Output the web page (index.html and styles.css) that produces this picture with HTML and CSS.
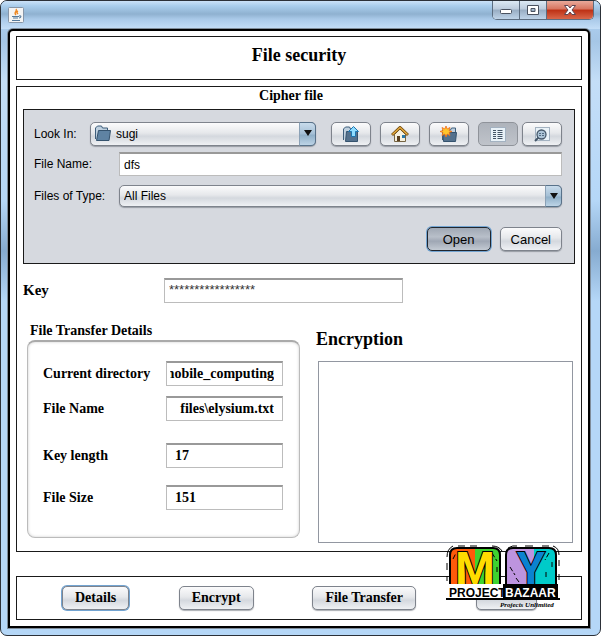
FILE: index.html
```
<!DOCTYPE html>
<html lang="en">
<head>
    <meta charset="UTF-8">
    <meta name="viewport" content="width=device-width, initial-scale=1.0">
    <title>File security</title>
    <link rel="stylesheet" href="styles.css">
</head>
<body>
    <div class="window">
        <div class="titlebar">
            <svg class="java-icon" viewBox="0 0 16 16">
                <rect x="0.5" y="0.5" width="15" height="15" rx="1" fill="#f4f4f4" stroke="#8796a8"/>
                <path d="M8 2c2 2-3 3 0 6M10 4c-2 1-1 2 0 3" fill="none" stroke="#ee8822" stroke-width="1.4"/>
                <path d="M4 9.500h7M5 11h5M4 13.500h8M11 9c3-1 2 2 0 2" fill="none" stroke="#557a9c" stroke-width="1.1"/>
            </svg>
            <div class="window-buttons">
                <button type="button" class="win-btn minimize" aria-label="Minimize">
                    <svg width="14" height="12" viewBox="0 0 14 12"><rect x="1.500" y="5.500" width="11" height="4" rx="1" fill="#fff" stroke="#4a5260"/></svg>
                </button>
                <button type="button" class="win-btn maximize" aria-label="Maximize">
                    <svg width="14" height="12" viewBox="0 0 14 12"><path d="M1.500 1.500h11v9h-11zM5 4.500h4v3H5z" fill="#fff" fill-rule="evenodd" stroke="#4a5260"/></svg>
                </button>
                <button type="button" class="win-btn close" aria-label="Close">
                    <svg width="14" height="12" viewBox="0 0 14 12"><path d="M1.500 1.500h3.500l2 2.500 2-2.500h3.500l-3.500 4.500 3.500 4.500H9L7 8l-2 2.500H1.500L5 6z" fill="#fff" stroke="#5d4450"/></svg>
                </button>
            </div>
        </div>

        <div class="content">
            <header class="panel">
                <h1>File security</h1>
            </header>

            <main class="panel main-panel">
                <h2>Cipher file</h2>

                <form class="chooser">
                    <div class="row look-row">
                        <label for="lookIn">Look In:</label>
                        <div class="select with-icon">
                            <svg class="folder" width="18" height="17" viewBox="0 0 18 17">
                                <path d="M1.500 14V3l2-2h4l1 2h5v3" fill="#bfd0df" stroke="#3f5f7c"/>
                                <path d="M4.500 5.500h12l-1.500 10H2.500z" fill="#5f83a3" stroke="#35536e"/>
                            </svg>
                            <select id="lookIn"><option>sugi</option></select>
                            <span class="arrow"></span>
                        </div>
                        <div class="tools">
                            <button type="button" class="btn tool" aria-label="Up one level">
                                <svg width="18" height="17" viewBox="0 0 18 17">
                                    <path d="M1.500 14V3l2-2h4l1 2h5v3" fill="#bfd0df" stroke="#3f5f7c"/>
                                    <path d="M4.500 5.500h11v10h-12z" fill="#54718d" stroke="#35536e"/>
                                    <path d="M11.500 0.500l5 5h-3v5h-4v-5h-3z" fill="#8edcff" stroke="#1d74ae"/>
                                </svg>
                            </button>
                            <button type="button" class="btn tool" aria-label="Home">
                                <svg width="18" height="17" viewBox="0 0 18 17">
                                    <path d="M3.500 8.500v7h11v-7L9 3z" fill="#f6f1e0" stroke="#766442"/>
                                    <path d="M1 9l8-7.500L17 9" fill="none" stroke="#765016" stroke-width="3"/>
                                    <path d="M1.500 8.500L9 1.500l7.500 7" fill="none" stroke="#efb23f" stroke-width="1.2"/>
                                    <path d="M6 10h3v5H6z" fill="#5a4020"/>
                                    <path d="M11 9h3v3h-3z" fill="#2879ac"/>
                                </svg>
                            </button>
                            <button type="button" class="btn tool" aria-label="New folder">
                                <svg width="18" height="17" viewBox="0 0 18 17">
                                    <path d="M2.500 14V4h8l1-2h4v4" fill="#bfd0df" stroke="#3f5f7c"/>
                                    <path d="M3 6.500h13.500l-1 9h-12z" fill="#54718d" stroke="#35536e"/>
                                    <path d="M6 0l1.200 3L10 1.500 9 4.500l3 1-3 1 1 3-2.800-1.500L6 11 4.800 8 2 9.500l1-3-3-1 3-1-1-3L4.800 3z" fill="#ffc52c" stroke="#f06c18" stroke-width="0.8"/>
                                </svg>
                            </button>
                            <button type="button" class="btn tool pressed" aria-label="List view">
                                <svg width="16" height="15" viewBox="0 0 16 15">
                                    <rect x="0.5" y="0.5" width="15" height="14" fill="#e9f2f8" stroke="#a3b2c1"/>
                                    <path d="M3 3.500h3M3 5.500h3M3 7.500h3M3 9.500h3M3 11.500h3M7.500 3.500h5M7.500 5.500h5M7.500 7.500h5M7.500 9.500h5M7.500 11.500h5" stroke="#445566"/>
                                </svg>
                            </button>
                            <button type="button" class="btn tool last" aria-label="Details view">
                                <svg width="16" height="15" viewBox="0 0 16 15">
                                    <rect x="1.500" y="0.500" width="14" height="13" fill="#e9f2f8" stroke="#a3b2c1"/>
                                    <circle cx="7.500" cy="7.500" r="4.500" fill="#adc5d8" stroke="#455769" stroke-width="1.3"/>
                                    <path d="M4.500 10.500L1 14" stroke="#455769" stroke-width="2"/>
                                    <path d="M5 6.500h5M5 8.500h5" stroke="#526b82" stroke-dasharray="2 1"/>
                                </svg>
                            </button>
                        </div>
                    </div>
                    <div class="row">
                        <label for="fileName">File Name:</label>
                        <input type="text" id="fileName" class="field" value="dfs">
                    </div>
                    <div class="row type-row">
                        <label for="fileType">Files of Type:</label>
                        <div class="select">
                            <select id="fileType"><option>All Files</option></select>
                            <span class="arrow"></span>
                        </div>
                    </div>
                    <div class="actions">
                        <button type="button" class="btn open">Open</button>
                        <button type="button" class="btn">Cancel</button>
                    </div>
                </form>

                <div class="key-row">
                    <label for="key">Key</label>
                    <input type="text" id="key" class="field" value="*****************">
                </div>

                <div class="columns">
                    <section class="details">
                        <h3>File Transfer Details</h3>
                        <div class="details-box">
                            <div class="detail">
                                <label for="directory">Current directory</label>
                                <input type="text" id="directory" class="field path" value="mobile_computing">
                            </div>
                            <div class="detail">
                                <label for="transferName">File Name</label>
                                <input type="text" id="transferName" class="field path" value="files\elysium.txt">
                            </div>
                            <div class="detail spaced">
                                <label for="keyLength">Key length</label>
                                <input type="text" id="keyLength" class="field" value="17">
                            </div>
                            <div class="detail spaced">
                                <label for="fileSize">File Size</label>
                                <input type="text" id="fileSize" class="field" value="151">
                            </div>
                        </div>
                    </section>
                    <section class="encryption">
                        <label for="output">Encryption</label>
                        <textarea id="output"></textarea>
                    </section>
                </div>
            </main>

            <footer class="panel footer">
                <button type="button" class="btn focused">Details</button>
                <button type="button" class="btn">Encrypt</button>
                <button type="button" class="btn">File Transfer</button>
                <button type="button" class="btn cancel" aria-label="Cancel"></button>
                <svg class="logo" width="114" height="68" viewBox="0 0 114 68">
                    <path d="M4 39V10q0-7 7-7h18v36z" fill="#ff5a0a"/>
                    <path d="M29 3h18q7 0 7 7v29H29z" fill="#3fd32f"/>
                    <path d="M60 39V10q0-7 7-7h21v36z" fill="#bd94df"/>
                    <path d="M88 3h15q7 0 7 7v29H88z" fill="#00cbc9"/>
                    <path d="M4 39V10q0-7 7-7h36q7 0 7 7v29M60 39V10q0-7 7-7h36q7 0 7 7v29" fill="none" stroke="#000" stroke-width="2"/>
                    <path d="M1 12q0-8 6-11M12 1h7M24 1h7M46 1q7 0 10 5M62 3q5-3 9-2M79 1h8M96 1h7M107 1q6 2 6 9M1 18v7M113 15v6M1 31v5M113 29v6" fill="none" stroke="#000"/>
                    <path d="M7 14l3-6M46 8l5 8M51 22v7M64 22l5 8M70 33l3 4M103 8l-4 7M106 17v6M100 27v7" stroke="#000" stroke-dasharray="5 2"/>
                    <text class="logo-m" x="29" y="39">M</text>
                    <text class="logo-y" x="85" y="39">Y</text>
                    <path d="M2 39h55v15H2z" fill="#fff"/>
                    <path d="M57 39h55v15H57zM0 53h114v2H0z" fill="#000"/>
                    <text class="logo-word" x="3" y="52">PROJECT</text>
                    <text class="logo-word light" x="59" y="52">BAZAAR</text>
                    <text class="logo-tag" x="54" y="62">Projects Unlimited</text>
                </svg>
            </footer>
        </div>
    </div>
</body>
</html>
```
FILE: styles.css
```
* {
    box-sizing: border-box;
}

body {
    margin: 0;
    background-color: #fff;
    color: #000;
    font-family: "Liberation Serif", serif;
}

h1,
h2,
h3 {
    margin: 0;
}

.window {
    margin: 0 2px 2px 0;
    padding: 0 10px 7px 7px;
    border: 1px solid #2c3138;
    border-radius: 7px;
    background-color: #b5d7f7;
    background-image: linear-gradient(#b5d7f7, #a5c6e6 40px, #c4def7 80px, #b5d7f7 200px, #86abd0 250px, #b5d7f7 300px);
}

/* Title bar */
.titlebar {
    display: flex;
    justify-content: space-between;
    height: 28px;
    margin: 0 -10px 0 -7px;
    padding: 0 6px 0 7px;
    border-radius: 6px 6px 0 0;
    background-image: linear-gradient(#cbe2f8, #a9cdec 5px, #8fb1d0 13px, #a9c9e8 18px, #c4def7);
}

.java-icon {
    width: 16px;
    height: 16px;
    margin-top: 6px;
}

.window-buttons {
    display: flex;
    height: 19px;
    border: 1px solid #5c6d80;
    border-top: none;
    border-radius: 0 0 5px 5px;
    overflow: hidden;
}

.win-btn {
    display: flex;
    align-items: center;
    justify-content: center;
    width: 27px;
    padding: 0;
    border: none;
    border-right: 1px solid #5c6d80;
    background-image: linear-gradient(#dce9f4, #bccbdc 45%, #98adc3 50%, #bed3e8);
}

.win-btn.close {
    width: 46px;
    border-right: none;
    background-image: linear-gradient(#e9a99a, #d7745e 45%, #bd3014 50%, #d9674a);
}

/* Content */
.content {
    padding: 5px 6px 6px;
    border: 2px solid #000;
    border-radius: 5px 5px 0 0;
    background-color: #fff;
    box-shadow: 0 0 0 1px #7f8c99;
}

.panel {
    border: 1px solid #1a1a1a;
    margin-bottom: 6px;
}

header.panel {
    height: 44px;
    text-align: center;
}

h1 {
    font-size: 18px;
    line-height: 36px;
}

h2 {
    padding-right: 16px;
    font-size: 14px;
    line-height: 18px;
    text-align: center;
}

.main-panel {
    padding: 0 6px 8px;
    margin-bottom: 24px;
}

.btn {
    height: 24px;
    padding: 0 10px;
    border: 1px solid #7e838c;
    border-radius: 5px;
    background-image: linear-gradient(#fbfbfc, #e6e8eb 45%, #d4d8de 60%, #eff1f4);
    box-shadow: 0 1px 1px rgba(90, 95, 105, 0.5);
    color: #000;
    font-family: "Liberation Sans", sans-serif;
    font-size: 13px;
}

.field {
    height: 25px;
    min-width: 0;
    padding: 0 4px;
    border: 1px solid #bcbcbc;
    border-top: 2px solid #999;
    background-color: #fff;
    color: #000;
}

/* File chooser */
.chooser {
    margin-top: 4px;
    padding: 12px;
    padding-left: 10px;
    border: 1px solid #1a1a1a;
    background-color: #d6d9df;
    font-family: "Liberation Sans", sans-serif;
    font-size: 12px;
}

.row {
    display: flex;
    align-items: center;
    margin-bottom: 6px;
}

.row label {
    flex: 0 0 85px;
}

.row .field {
    flex: 1;
    height: 24px;
    font-family: "Liberation Sans", sans-serif;
    font-size: 12px;
}

.look-row label {
    flex-basis: 56px;
}

.type-row {
    margin-top: 9px;
    margin-bottom: 20px;
}

.select {
    position: relative;
    flex: 1;
    height: 22px;
}

.look-row .select {
    height: 24px;
}

select {
    appearance: none;
    width: 100%;
    height: 100%;
    padding: 0 20px 0 4px;
    border: 1px solid #7e838c;
    border-radius: 5px;
    background-image: linear-gradient(#fbfbfc, #e6e8eb 45%, #d4d8de 60%, #eff1f4);
    box-shadow: 0 1px 1px rgba(90, 95, 105, 0.5);
    color: #000;
    font-family: "Liberation Sans", sans-serif;
    font-size: 12px;
}

.with-icon select {
    padding-left: 25px;
}

.folder {
    position: absolute;
    left: 4px;
    top: 3px;
}

.arrow {
    position: absolute;
    top: 0;
    right: 0;
    width: 17px;
    height: 100%;
    border: 1px solid #58728a;
    border-left-color: #8ba1b6;
    border-radius: 0 5px 5px 0;
    background-image: linear-gradient(#c9dcec, #a4bfd5 50%, #8fafc8 55%, #bdd4e6);
    pointer-events: none;
}

.arrow::after {
    content: "";
    position: absolute;
    left: 4px;
    top: 7px;
    border: 4px solid transparent;
    border-top: 6px solid #111;
    border-bottom: none;
}

.tools {
    display: flex;
    gap: 9px;
    margin-left: 15px;
}

.tool {
    display: flex;
    align-items: center;
    justify-content: center;
    width: 40px;
    padding: 0;
}

.tool.pressed {
    border-color: #8f939a;
    background-image: linear-gradient(#aeb3bb, #bfc3ca);
    box-shadow: none;
}

.tool.last {
    margin-left: -5px;
}

.actions {
    display: flex;
    justify-content: flex-end;
    gap: 9px;
}

.btn.open {
    padding: 0 15px;
    border-color: #20262e;
    background-image: linear-gradient(#a0a8b4, #b8bfc9 40%, #9fa7b4 60%, #c3cad3);
    box-shadow: 0 0 0 1px #73a4d1;
}

/* Key */
.key-row {
    display: flex;
    align-items: center;
    margin-top: 14px;
    font-size: 15px;
    font-weight: bold;
}

.key-row label {
    width: 141px;
}

.key-row .field {
    flex: 0 1 239px;
    padding-bottom: 4px;
    color: #333;
    font-family: "Liberation Sans", sans-serif;
    font-size: 13px;
}

/* Details and encryption */
.columns {
    display: flex;
    gap: 16px;
    margin-top: 19px;
}

.details {
    flex: 0 0 273px;
    margin-left: 4px;
}

h3 {
    padding-left: 3px;
    font-size: 14px;
    line-height: 18px;
}

.details-box {
    height: 198px;
    padding: 19px 15px;
    border: 1px solid #bbb;
    border-top: 2px solid #aaa;
    border-radius: 8px;
    box-shadow: inset 0 0 3px #ccc;
}

.detail {
    display: flex;
    align-items: center;
    margin-bottom: 10px;
    font-size: 14px;
    font-weight: bold;
}

.detail.spaced {
    margin-top: 22px;
    margin-bottom: 17px;
}

.detail.spaced + .spaced {
    margin-top: 0;
}

.detail label {
    width: 123px;
}

.detail .field {
    width: 117px;
    padding: 0 8px;
    font-family: "Liberation Serif", serif;
    font-size: 14px;
    font-weight: bold;
}

/* Long paths keep their end in view */
.detail .path {
    padding: 0 8px 0 3px;
    direction: rtl;
}

.encryption {
    flex: 1;
    display: flex;
    flex-direction: column;
    padding-top: 6px;
    padding-right: 2px;
}

.encryption label {
    font-size: 18px;
    font-weight: bold;
    line-height: 22px;
}

textarea {
    height: 182px;
    margin: 11px 0 0 2px;
    border: 1px solid #9297a1;
    resize: none;
}

/* Footer */
.footer {
    position: relative;
    display: grid;
    grid-template-columns: 117fr 134fr 164fr auto;
    align-items: center;
    justify-items: start;
    height: 44px;
    margin-bottom: 0;
    padding: 0 44px 0 45px;
}

.footer .btn {
    padding: 0 12px;
    font-family: "Liberation Serif", serif;
    font-size: 14px;
    font-weight: bold;
}

.footer .cancel {
    width: 61px;
}

.btn.focused {
    box-shadow: 0 0 0 1px #73a4d1;
}

.logo {
    position: absolute;
    right: 21px;
    bottom: 6px;
}

.logo-m,
.logo-y {
    font-family: Roboto, sans-serif;
    font-size: 45px;
    font-weight: bold;
    text-anchor: middle;
    stroke: #000;
    stroke-width: 2px;
    paint-order: stroke;
}

.logo-m {
    fill: #ffdc00;
}

.logo-y {
    fill: #0b82d0;
}

.logo-word {
    font-family: "Liberation Sans", sans-serif;
    font-size: 12px;
    font-weight: bold;
}

.logo-word.light {
    fill: #fff;
}

.logo-tag {
    font-family: "Liberation Serif", serif;
    font-size: 7px;
    font-style: italic;
    font-weight: bold;
}
```
